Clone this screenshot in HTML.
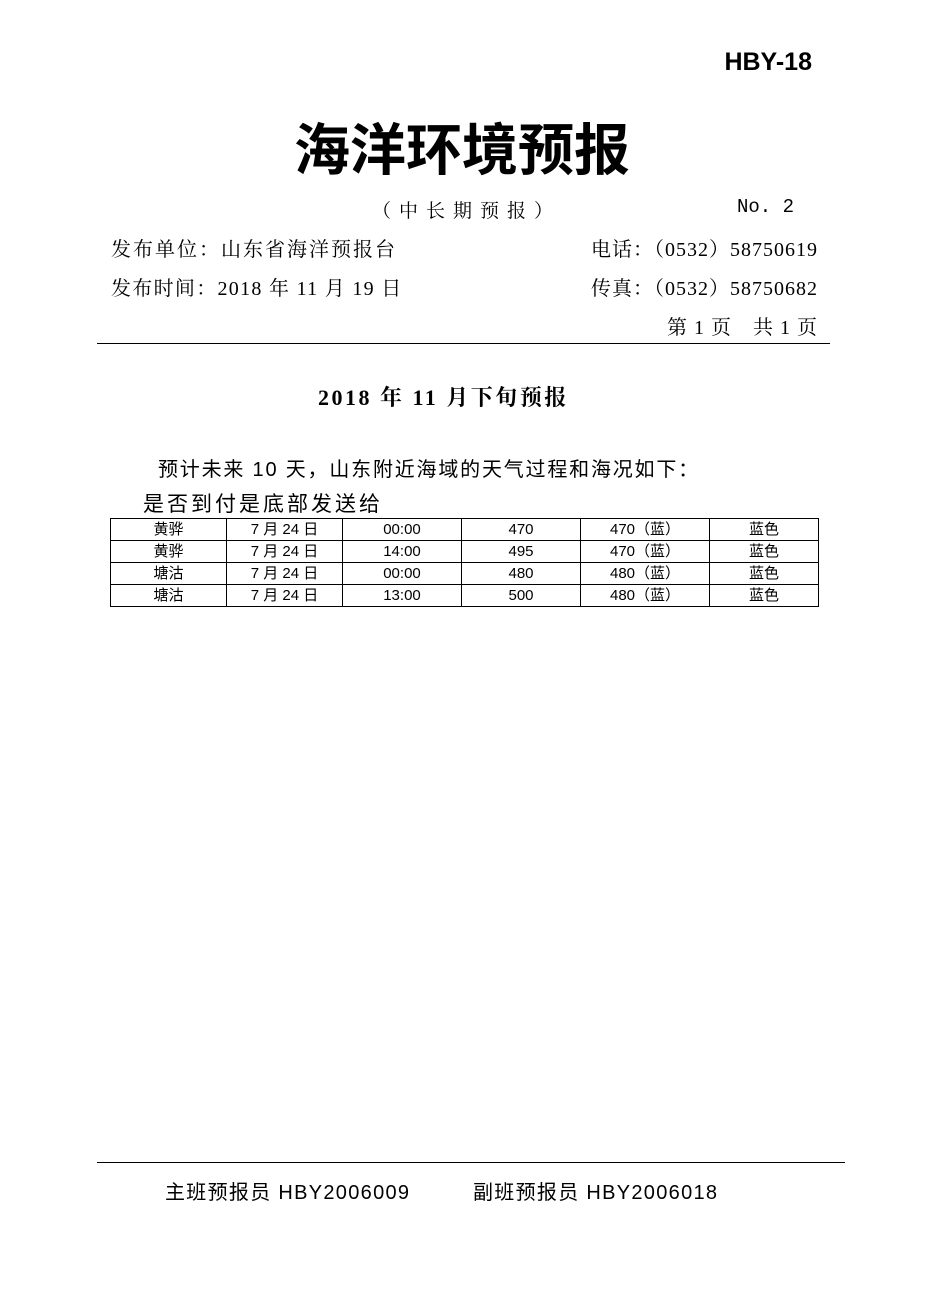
<!DOCTYPE html>
<html><head><meta charset="utf-8"><style>
body{margin:0;width:926px;height:1309px;background:#fff;position:relative;font-family:"Liberation Serif","Noto Serif CJK SC",serif;color:#000;overflow:hidden}
.a{position:absolute;white-space:nowrap}
.s{font-family:"Liberation Sans","Noto Sans CJK SC",sans-serif}
table{position:absolute;left:110px;top:518px;border-collapse:collapse;font-family:"Liberation Sans","Noto Sans CJK SC",sans-serif;font-size:15px}
td{border:1.5px solid #000;height:21px;padding:0;text-align:center;line-height:21px}
</style></head><body>
<div class="a s" style="right:114px;top:48px;font-size:25px;font-weight:bold">HBY-18</div>
<div class="a s" style="left:294px;top:106px;font-size:56px;font-weight:bold">海洋环境预报</div>
<div class="a" style="left:372px;top:196px;font-size:19px;letter-spacing:8px">（中长期预报）</div>
<div class="a" style="right:132px;top:196px;font-size:19px;font-family:'Liberation Mono',monospace">No. 2</div>
<div class="a" style="left:111px;top:233px;font-size:20px;letter-spacing:2px">发布单位：山东省海洋预报台</div>
<div class="a" style="right:108px;top:233px;font-size:20px;letter-spacing:1px">电话：（0532）58750619</div>
<div class="a" style="left:111px;top:272px;font-size:20px;letter-spacing:1.3px">发布时间：2018 年 11 月 19 日</div>
<div class="a" style="right:108px;top:272px;font-size:20px;letter-spacing:1px">传真：（0532）58750682</div>
<div class="a" style="right:108px;top:311px;font-size:20px;letter-spacing:1px">第 1 页　共 1 页</div>
<div class="a" style="left:97px;top:343px;width:733px;height:1px;background:#000"></div>
<div class="a" style="left:318px;top:381px;font-size:22px;font-weight:bold;letter-spacing:2.5px">2018 年 11 月下旬预报</div>
<div class="a s" style="left:158px;top:453px;font-size:20px;letter-spacing:1.8px">预计未来 10 天，山东附近海域的天气过程和海况如下：</div>
<div class="a s" style="left:143px;top:488px;font-size:21px;letter-spacing:3px">是否到付是底部发送给</div>
<table>
<tr><td style="width:115px">黄骅</td><td style="width:115px">7 月 24 日</td><td style="width:118px">00:00</td><td style="width:118px">470</td><td style="width:128px">470（蓝）</td><td style="width:108px">蓝色</td></tr>
<tr><td>黄骅</td><td>7 月 24 日</td><td>14:00</td><td>495</td><td>470（蓝）</td><td>蓝色</td></tr>
<tr><td>塘沽</td><td>7 月 24 日</td><td>00:00</td><td>480</td><td>480（蓝）</td><td>蓝色</td></tr>
<tr><td>塘沽</td><td>7 月 24 日</td><td>13:00</td><td>500</td><td>480（蓝）</td><td>蓝色</td></tr>
</table>
<div class="a" style="left:97px;top:1162px;width:748px;height:1px;background:#000"></div>
<div class="a s" style="left:165px;top:1176px;font-size:20px;letter-spacing:1.3px">主班预报员  HBY2006009</div>
<div class="a s" style="left:473px;top:1176px;font-size:20px;letter-spacing:1.3px">副班预报员  HBY2006018</div>
</body></html>
